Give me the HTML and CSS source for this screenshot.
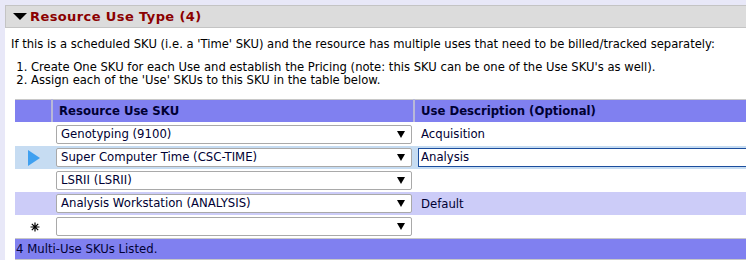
FILE: index.html
```html
<!DOCTYPE html>
<html lang="en">
<head>
  <meta charset="UTF-8">
  <title>Resource Use Type</title>
  <link rel="stylesheet" href="styles.css">
</head>
<body>
  <div class="panel">
    <div class="panel-head"><span class="caret"></span>Resource Use Type (4)</div>
    <div class="panel-body">
      <p class="intro">If this is a scheduled SKU (i.e. a 'Time' SKU) and the resource has multiple uses that need to be billed/tracked separately:</p>
      <ol class="steps">
        <li>Create One SKU for each Use and establish the Pricing (note: this SKU can be one of the Use SKU's as well).</li>
        <li>Assign each of the 'Use' SKUs to this SKU in the table below.</li>
      </ol>

      <table class="grid">
        <thead>
          <tr>
            <th class="ind"></th>
            <th class="sku">Resource Use SKU</th>
            <th>Use Description (Optional)</th>
          </tr>
        </thead>
        <tbody>
          <tr class="first">
            <td class="ind"></td>
            <td><div class="pick">Genotyping (9100)</div></td>
            <td class="desc">Acquisition</td>
          </tr>
          <tr class="current">
            <td class="ind"><span class="arrow"></span></td>
            <td><div class="pick">Super Computer Time (CSC-TIME)</div></td>
            <td><div class="edit">Analysis</div></td>
          </tr>
          <tr>
            <td class="ind"></td>
            <td><div class="pick">LSRII (LSRII)</div></td>
            <td class="desc"></td>
          </tr>
          <tr class="alt">
            <td class="ind"></td>
            <td><div class="pick">Analysis Workstation (ANALYSIS)</div></td>
            <td class="desc">Default</td>
          </tr>
          <tr>
            <td class="ind">
              <svg class="star" width="10" height="10" viewBox="0 0 10 10">
                <path d="M5 0.5V9.5M0.5 5H9.5M1.8 1.8L8.2 8.2M8.2 1.8L1.8 8.2" stroke="#000" stroke-width="1.2"/>
              </svg>
            </td>
            <td><div class="pick"></div></td>
            <td class="desc"></td>
          </tr>
        </tbody>
        <tfoot>
          <tr>
            <td colspan="3">4 Multi-Use SKUs Listed.</td>
          </tr>
        </tfoot>
      </table>
    </div>
  </div>
</body>
</html>
```

FILE: styles.css
```css
html, body { margin: 0; height: 100%; overflow: hidden; }
body { background: #e8e8f8; padding: 5px 0 0 5px; font-family: "DejaVu Sans", Verdana, sans-serif; color: #000; }

.panel { background: #fff; height: 100%; }
.panel-head { height: 21px; line-height: 21px; background: #dcdcdc; border-top: 1px solid #c4c4c4; border-left: 1px solid #c4c4c4; border-bottom: 1px solid #c4c4c4; padding-left: 7px; font-size: 13px; letter-spacing: 0.4px; font-weight: bold; color: #8b0000; }
.caret { display: inline-block; width: 0; height: 0; border-left: 7px solid transparent; border-right: 7px solid transparent; border-top: 7px solid #000; margin-right: 3px; vertical-align: 1px; }

.panel-body { padding: 9px 0 0 6px; font-size: 11.6px; }
.intro { margin: 0 0 10px 0; line-height: 14px; }
.steps { margin: 0 0 12px 0; padding-left: 20px; line-height: 13px; }

.grid { width: 740px; margin-left: 4px; border-collapse: collapse; font-size: 11.7px; }
.grid th { background: #8080f0; height: 22px; text-align: left; padding: 0 0 0 6px; font-weight: bold; color: #000033; border-top: 1px solid #c8c8c8; border-left: 2px solid #b8b8d8; }
.grid th.ind { width: 30px; border-left: none; }
.grid th.sku { width: 354px; }
.grid td { height: 23px; padding: 0; color: #000033; }
.grid tr.first td { height: 24px; }
.grid td.ind { padding-left: 13px; }
.grid td.desc { padding-left: 7px; }
.grid tr.current td { background: #c6dcf2; }
.grid tr.alt td { background: #ccccf8; }
.grid tfoot td { background: #8080f0; height: 20px; padding-left: 1px; border-top: 1px solid #c8c8c8; border-bottom: 2px solid #c8c8c8; }

.star { display: block; margin-left: 2px; }
.arrow { display: block; width: 0; height: 0; border-top: 8px solid transparent; border-bottom: 8px solid transparent; border-left: 12px solid #3fa0f0; }

.pick { position: relative; height: 17px; line-height: 17px; margin: 0 2px 0 4px; padding-left: 4px; background: #fff; border: 1px solid #a9a9a9; border-radius: 2px; }
.pick::after { content: ""; position: absolute; right: 6px; top: 5px; border-left: 4px solid transparent; border-right: 4px solid transparent; border-top: 7px solid #000; }

.edit { height: 17px; line-height: 17px; margin-left: 4px; padding-left: 2px; background: #fff; border: 1px solid #1b4e9e; border-right: none; }
```
